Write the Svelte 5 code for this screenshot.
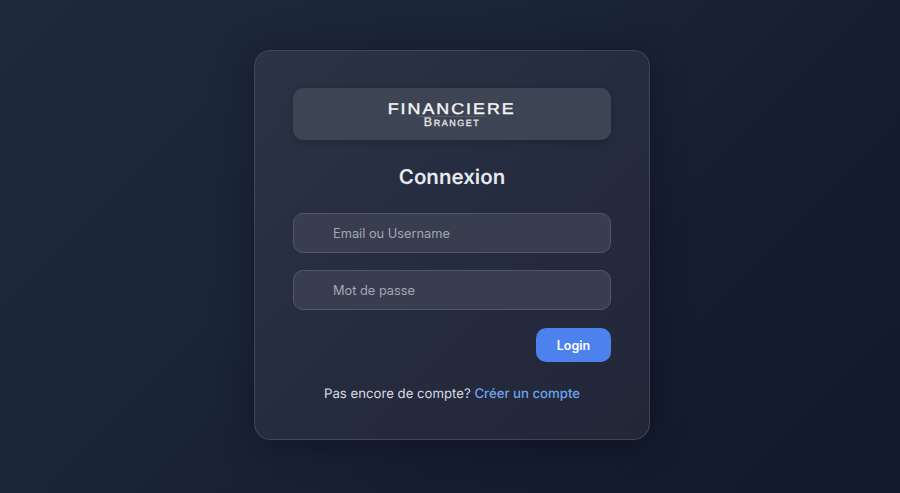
<script lang="ts">
	let identifier = '';
	let password = '';
</script>

<div class="page">
	<form class="card" on:submit|preventDefault>
		<div class="logo">
			<span class="logo-main">FINANCIERE</span>
			<span class="logo-sub">Branget</span>
		</div>

		<h1>Connexion</h1>

		<div class="fields">
			<input type="text" placeholder="Email ou Username" bind:value={identifier} />
			<input type="password" placeholder="Mot de passe" bind:value={password} />
		</div>

		<div class="actions">
			<button type="submit">Login</button>
		</div>

		<p class="signup">Pas encore de compte? <a href="#signup">Créer un compte</a></p>
	</form>
</div>

<style>
	:global(body) {
		margin: 0;
		background: #161e31;
	}

	.page {
		box-sizing: border-box;
		min-height: 100vh;
		display: flex;
		align-items: center;
		justify-content: center;
		padding: 0 0 3px 4px;
		background: linear-gradient(135deg, #1f293c 0%, #1b2538 40%, #161d31 65%, #12192c 100%);
		font-family: Inter, 'Liberation Sans', sans-serif;
		text-rendering: geometricPrecision;
	}

	.card {
		box-sizing: border-box;
		width: 396px;
		height: 390px;
		padding: 37px 38px 0;
		background: linear-gradient(135deg, #2c3344 0%, #262c3f 50%, #212737 100%);
		border: 1px solid #3f4757;
		border-radius: 16px;
		box-shadow: 0 4px 36px rgba(0, 0, 0, 0.34);
	}

	.logo {
		height: 52px;
		display: flex;
		flex-direction: column;
		align-items: center;
		justify-content: center;
		padding-top: 2px;
		box-sizing: border-box;
		background: #3d4453;
		border-radius: 10px;
		box-shadow: 0 2px 8px rgba(0, 0, 0, 0.18);
		color: #f4f5f7;
		font-family: 'Liberation Sans', sans-serif;
	}

	.logo-main {
		display: block;
		font-size: 15.5px;
		letter-spacing: 1.75px;
		line-height: 13px;
		transform: scaleX(1.15);
		-webkit-text-stroke: 0.4px #f4f5f7;
	}

	.logo-sub {
		display: block;
		padding: 1px 6px 0;
		border-top: 1px solid #565d6b;
		font-size: 12.5px;
		font-variant: small-caps;
		letter-spacing: 1.5px;
		line-height: 9px;
		color: #e3e6ea;
		-webkit-text-stroke: 0.3px #e3e6ea;
	}

	h1 {
		margin: 24px 0 23px;
		font-size: 20.5px;
		line-height: 26px;
		font-weight: 600;
		text-align: center;
		color: #e5e9f0;
	}

	.fields {
		display: flex;
		flex-direction: column;
		gap: 17px;
	}

	input {
		box-sizing: border-box;
		width: 100%;
		height: 40px;
		padding: 0 16px 0 39px;
		background: #383e50;
		border: 1px solid #4f5769;
		border-radius: 10px;
		color: #e5e9f0;
		font-family: inherit;
		font-size: 12.8px;
		outline: none;
	}

	input::placeholder {
		color: #a1a7b2;
	}

	.actions {
		display: flex;
		justify-content: flex-end;
		margin-top: 18px;
	}

	button {
		width: 75px;
		height: 34px;
		background: #4c81ee;
		border: none;
		border-radius: 10px;
		color: #fff;
		font-family: inherit;
		font-size: 12.5px;
		font-weight: 600;
	}

	.signup {
		margin: 23px 0 0;
		font-size: 13.2px;
		line-height: 18px;
		text-align: center;
		color: #d8dce3;
	}

	.signup a {
		color: #6fa2ec;
		font-weight: 500;
		text-decoration: none;
	}
</style>
